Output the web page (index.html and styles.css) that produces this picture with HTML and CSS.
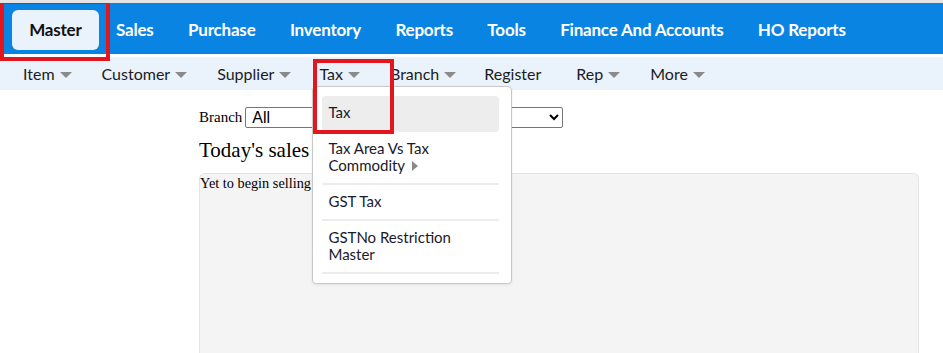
FILE: index.html
```html
<!DOCTYPE html>
<html lang="en">
<head>
    <meta charset="UTF-8">
    <meta name="viewport" content="width=device-width, initial-scale=1.0">
    <title>Master - Tax</title>
    <link rel="stylesheet" href="styles.css">
</head>
<body>
    <div class="topbar">
        <a class="top-link active">Master</a>
        <a class="top-link">Sales</a>
        <a class="top-link">Purchase</a>
        <a class="top-link">Inventory</a>
        <a class="top-link">Reports</a>
        <a class="top-link">Tools</a>
        <a class="top-link">Finance And Accounts</a>
        <a class="top-link">HO Reports</a>
    </div>

    <ul class="subnav">
        <li class="sub-item">Item <span class="caret"></span></li>
        <li class="sub-item">Customer <span class="caret"></span></li>
        <li class="sub-item">Supplier <span class="caret"></span></li>
        <li class="sub-item open">Tax <span class="caret"></span>
            <div class="dropdown">
                <div class="drop-item hover">Tax</div>
                <div class="drop-item">Tax Area Vs Tax Commodity <span class="caret-right"></span></div>
                <div class="drop-item">GST Tax</div>
                <div class="drop-item">GSTNo Restriction Master</div>
            </div>
        </li>
        <li class="sub-item">Branch <span class="caret"></span></li>
        <li class="sub-item register">Register</li>
        <li class="sub-item">Rep <span class="caret"></span></li>
        <li class="sub-item">More <span class="caret"></span></li>
    </ul>

    <div class="main">
        <div class="branch-row">
            <label for="branch">Branch</label>
            <select id="branch">
                <option>All</option>
            </select>
        </div>
        <h2 class="sales-title">Today's sales</h2>
        <div class="sales-box">Yet to begin selling</div>
    </div>

    <!-- highlight boxes drawn over the screenshot -->
    <span class="mark mark-master"></span>
    <span class="mark mark-tax"></span>
</body>
</html>
```

FILE: styles.css
```css
body {
    margin: 0;
    font-family: "Liberation Serif", "Times New Roman", serif;
    background: #fff;
    color: #000;
    border-top: 3px solid #e4e4e4;
    position: relative;
    height: 350px;
    overflow: hidden;
}

.topbar {
    display: flex;
    align-items: center;
    height: 49px;
    padding: 2px 0 0 12px;
    background: #0a84e3;
}

.top-link {
    padding: 0 17.2px;
    font-family: Lato, "Liberation Sans", sans-serif;
    font-weight: 700;
    font-size: 17px;
    color: #fff;
    line-height: 40px;
    letter-spacing: -0.2px;
}

.top-link.active {
    background: #eaf3fc;
    color: #111;
    border-radius: 6px;
}

.subnav {
    display: flex;
    align-items: center;
    list-style: none;
    margin: 3px 0 0 0;
    padding: 0 0 0 8px;
    height: 33px;
    background: #eaf2fb;
    font-family: Lato, "Liberation Sans", sans-serif;
    font-size: 16px;
    color: #1c1c1c;
}

.sub-item {
    position: relative;
    display: flex;
    align-items: center;
    height: 100%;
    padding: 0 15px;
}

.sub-item.open {
    margin-left: -2px;
}

.sub-item.register {
    margin-left: -2px;
    padding-right: 20px;
}

.caret {
    display: inline-block;
    margin-left: 5px;
    margin-top: 2px;
    border-left: 6px solid transparent;
    border-right: 6px solid transparent;
    border-top: 6px solid #8a8a8a;
}

.dropdown {
    position: absolute;
    top: 29px;
    left: 8px;
    width: 177px;
    padding: 9px 12px 9px 9px;
    background: #fff;
    border: 1px solid #c9c9c9;
    border-radius: 4px;
    box-shadow: 0 1px 3px rgba(0, 0, 0, 0.08);
    font-size: 15px;
    color: #1a1a2a;
    z-index: 5;
}

.drop-item {
    padding: 8px 6px 9px;
    line-height: 17px;
    border-bottom: 2px solid #ececec;
}

.drop-item.hover {
    background: #ededed;
    border-radius: 4px;
    border-bottom-color: transparent;
}

.caret-right {
    display: inline-block;
    margin-left: 3px;
    border-top: 5px solid transparent;
    border-bottom: 5px solid transparent;
    border-left: 6px solid #8a8a8a;
}

.main {
    width: 720px;
    margin-left: 199px;
    padding-top: 17px;
}

.branch-row {
    display: flex;
    align-items: center;
    gap: 3px;
    font-size: 15px;
}

.branch-row select {
    width: 318px;
    height: 21px;
    padding: 0 0 0 2px;
    font-family: "Liberation Sans", Arial, sans-serif;
    font-size: 16px;
    color: #000;
    background: #fff;
    border: 1px solid #767676;
    border-radius: 2px;
}

.sales-title {
    margin: 10px 0 10px;
    font-size: 21px;
    font-weight: 400;
}

.sales-box {
    box-sizing: border-box;
    height: 180px;
    background: #f4f4f4;
    border: 1px solid #e4e4e4;
    border-bottom: none;
    border-radius: 6px 6px 0 0;
    font-size: 14.3px;
    line-height: 19px;
}

.mark {
    position: absolute;
    border: 4px solid #e3151d;
    z-index: 10;
}

.mark-master {
    left: 0;
    top: -3px;
    width: 102px;
    height: 53px;
}

.mark-tax {
    left: 313px;
    top: 56px;
    width: 73px;
    height: 67px;
}
```
